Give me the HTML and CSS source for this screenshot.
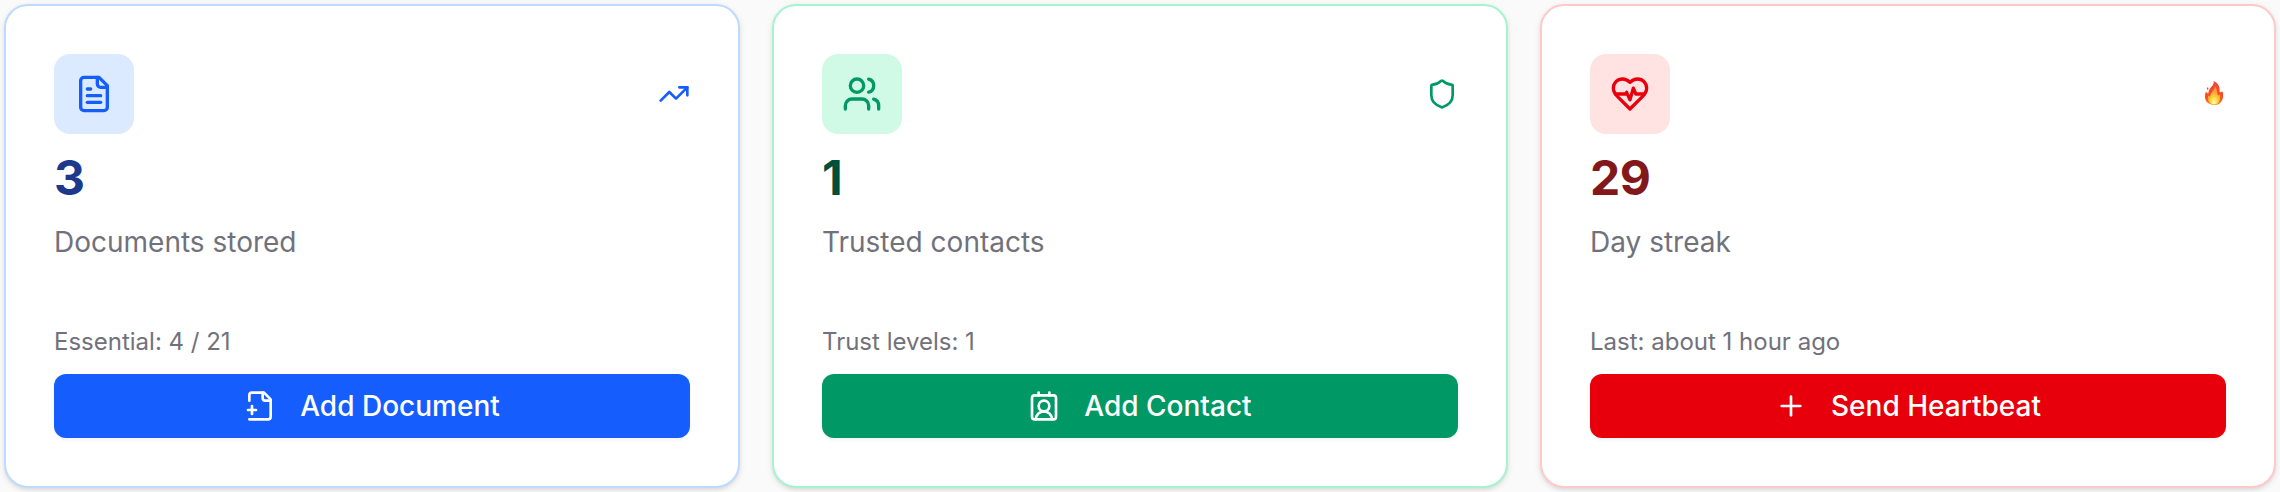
FILE: index.html
```
<!DOCTYPE html>
<html lang="en">
<head>
    <meta charset="UTF-8">
    <meta name="viewport" content="width=device-width, initial-scale=1.0">
    <title>Dashboard</title>
    <link rel="stylesheet" href="styles.css">
</head>
<body>
    <main class="stats-grid">
        <section class="card card-blue">
            <div class="card-header">
                <div class="icon-box">
                    <svg class="icon icon-lg" viewBox="0 0 24 24"><path d="M15 2H6a2 2 0 0 0-2 2v16a2 2 0 0 0 2 2h12a2 2 0 0 0 2-2V7Z"/><path d="M14 2v4a2 2 0 0 0 2 2h4"/><path d="M10 9H8"/><path d="M16 13H8"/><path d="M16 17H8"/></svg>
                </div>
                <svg class="icon icon-md" viewBox="0 0 24 24"><path d="M22 7l-8.5 8.5-5-5L2 17"/><path d="M16 7h6v6"/></svg>
            </div>
            <div class="stat-value">3</div>
            <div class="stat-label">Documents stored</div>
            <div class="stat-note">Essential: 4 / 21</div>
            <button class="button">
                <svg class="icon icon-md" viewBox="0 0 24 24"><path d="M4 22h14a2 2 0 0 0 2-2V7l-5-5H6a2 2 0 0 0-2 2v4"/><path d="M14 2v4a2 2 0 0 0 2 2h4"/><path d="M3 15h6"/><path d="M6 12v6"/></svg>
                <span>Add Document</span>
            </button>
        </section>

        <section class="card card-green">
            <div class="card-header">
                <div class="icon-box">
                    <svg class="icon icon-lg" viewBox="0 0 24 24"><path d="M16 21v-2a4 4 0 0 0-4-4H6a4 4 0 0 0-4 4v2"/><circle cx="9" cy="7" r="4"/><path d="M22 21v-2a4 4 0 0 0-3-3.87"/><path d="M16 3.13a4 4 0 0 1 0 7.75"/></svg>
                </div>
                <svg class="icon icon-md" viewBox="0 0 24 24"><path d="M20 13c0 5-3.5 7.5-7.66 8.95a1 1 0 0 1-.67-.01C7.5 20.5 4 18 4 13V6a1 1 0 0 1 1-1c2 0 4.5-1.2 6.24-2.72a1.17 1.17 0 0 1 1.52 0C14.51 3.81 17 5 19 5a1 1 0 0 1 1 1z"/></svg>
            </div>
            <div class="stat-value">1</div>
            <div class="stat-label">Trusted contacts</div>
            <div class="stat-note">Trust levels: 1</div>
            <button class="button">
                <svg class="icon icon-md" viewBox="0 0 24 24"><path d="M16 2v2"/><path d="M17.915 22a6 6 0 0 0-12 0"/><path d="M8 2v2"/><circle cx="12" cy="12" r="4"/><rect x="3" y="4" width="18" height="18" rx="2"/></svg>
                <span>Add Contact</span>
            </button>
        </section>

        <section class="card card-red">
            <div class="card-header">
                <div class="icon-box">
                    <svg class="icon icon-lg" viewBox="0 0 24 24"><path d="M19 14c1.49-1.46 3-3.21 3-5.5A5.5 5.5 0 0 0 16.5 3c-1.76 0-3 .5-4.5 2-1.5-1.5-2.74-2-4.5-2A5.5 5.5 0 0 0 2 8.5c0 2.3 1.5 4.05 3 5.5l7 7Z"/><path d="M3.22 12H9.5l.5-1 2 4.5 2-7 1.5 3.5h5.27"/></svg>
                </div>
                <svg class="flame" viewBox="0 0 24 24">
                    <defs>
                        <linearGradient id="flame-outer" x1="0" y1="0" x2="0" y2="1">
                            <stop offset="0" stop-color="#ee4a35"/>
                            <stop offset="0.7" stop-color="#fb4a1c"/>
                            <stop offset="1" stop-color="#ff8a1e"/>
                        </linearGradient>
                        <radialGradient id="flame-inner" cx="0.5" cy="0.88" r="0.8">
                            <stop offset="0" stop-color="#fffbd8"/>
                            <stop offset="0.3" stop-color="#ffe23c"/>
                            <stop offset="0.65" stop-color="#f9a83c"/>
                            <stop offset="1" stop-color="#f58a55"/>
                        </radialGradient>
                    </defs>
                    <path fill="url(#flame-outer)" d="M11.6 0c3.800 1.500 6 4.800 6 8.300 0 1.300-.1 2.300.200 3.100.9-.2 1.500-.7 2.700-1 .6 1.600.7 3.300.5 5.300C20.600 20.500 17.300 24 12.100 24 6.800 24 3 20.600 3 15.800c0-2 .3-3.700.9-5.200.6 1 1.300 1.900 2.400 2.200C6.700 8.500 8.300 7.200 10 5.100 11.400 3.600 11.900 1.900 11.600 0zM5.500 6.200c1.300.4 1.300 1.700.2 2.800C4.500 8.400 4.600 7.200 5.500 6.200z"/>
                    <path fill="url(#flame-inner)" d="M13 5c2.400 3 1.800 6.500 3 9.500.9-.2 1.600-.6 2.100-1.300 1 5.300-1.400 10.300-6 10.300s-7.300-4.200-5.900-9.200c.5.800 1.100 1.200 1.900 1.300C8.300 11.300 12.800 9.500 13 5z"/>
                </svg>
            </div>
            <div class="stat-value">29</div>
            <div class="stat-label">Day streak</div>
            <div class="stat-note">Last: about 1 hour ago</div>
            <button class="button">
                <svg class="icon icon-md" viewBox="0 0 24 24"><path d="M5 12h14"/><path d="M12 5v14"/></svg>
                <span>Send Heartbeat</span>
            </button>
        </section>
    </main>
</body>
</html>
```

FILE: styles.css
```
* {
    margin: 0;
    padding: 0;
    box-sizing: border-box;
}

body {
    font-family: Inter, 'Liberation Sans', sans-serif;
    background: #fafafa;
    overflow: hidden;
}

.stats-grid {
    display: grid;
    grid-template-columns: repeat(3, 1fr);
    gap: 32px;
    padding: 4px;
}

.card {
    display: flex;
    flex-direction: column;
    height: 484px;
    padding: 48px;
    background: #fff;
    border: 2px solid;
    border-radius: 24px;
    box-shadow: 0 2px 6px rgba(0, 0, 0, 0.1), 0 2px 4px -2px rgba(0, 0, 0, 0.1);
}

.card-header {
    display: flex;
    align-items: center;
    justify-content: space-between;
    margin-bottom: 12px;
}

.icon-box {
    display: flex;
    align-items: center;
    justify-content: center;
    width: 80px;
    height: 80px;
    border-radius: 16px;
}

.icon {
    flex-shrink: 0;
    fill: none;
    stroke: currentColor;
    stroke-width: 2;
    stroke-linecap: round;
    stroke-linejoin: round;
}

.icon-lg {
    width: 40px;
    height: 40px;
}

.icon-md {
    width: 32px;
    height: 32px;
}

.flame {
    width: 24px;
    height: 24px;
    margin-bottom: 2px;
}

.stat-value {
    font-size: 48px;
    font-weight: 700;
    line-height: 64px;
    letter-spacing: -0.5px;
}

.stat-label {
    margin-top: 12px;
    font-size: 28px;
    line-height: 40px;
    color: #71717b;
}

.stat-note {
    margin-top: auto;
    margin-bottom: 16px;
    font-size: 24px;
    line-height: 32px;
    color: #71717b;
}

.button {
    display: flex;
    align-items: center;
    justify-content: center;
    gap: 24px;
    height: 64px;
    border: none;
    border-radius: 12px;
    font-family: inherit;
    font-size: 28px;
    font-weight: 500;
    color: #fff;
    box-shadow: 0 2px 4px rgba(0, 0, 0, 0.05);
    cursor: pointer;
}

/* Blue */
.card-blue {
    border-color: #bedbff;
}

.card-blue .card-header {
    color: #155dfc;
}

.card-blue .icon-box {
    background: #dbeafe;
}

.card-blue .stat-value {
    color: #1c398e;
}

.card-blue .button {
    background: #155dfc;
}

/* Green */
.card-green {
    border-color: #a4f4cf;
}

.card-green .card-header {
    color: #009966;
}

.card-green .icon-box {
    background: #d0fae5;
}

.card-green .stat-value {
    color: #004f3b;
}

.card-green .button {
    background: #009966;
}

/* Red */
.card-red {
    border-color: #ffc9c9;
}

.card-red .card-header {
    color: #e7000b;
}

.card-red .icon-box {
    background: #ffe2e2;
}

.card-red .stat-value {
    color: #82181a;
}

.card-red .button {
    background: #e7000b;
}
```
